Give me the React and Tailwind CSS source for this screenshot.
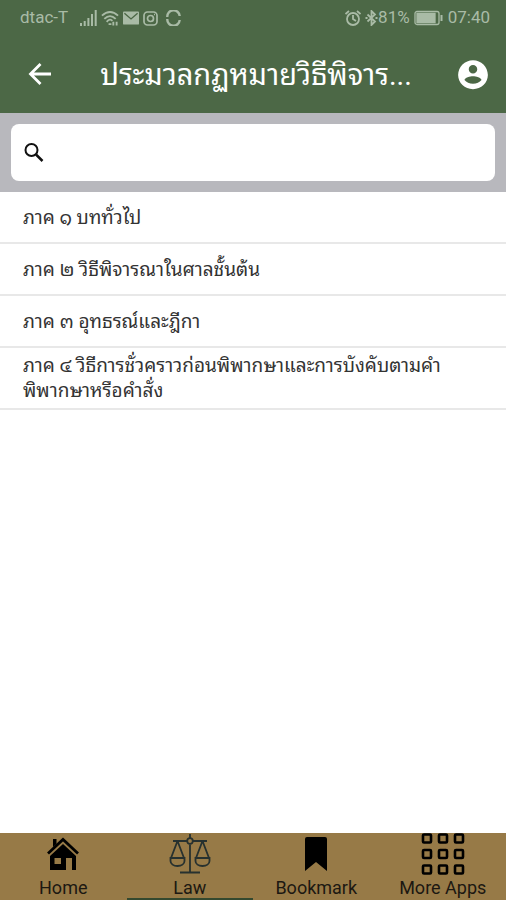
import React, { useState } from 'react';

const sections = [
  'ภาค ๑ บททั่วไป',
  'ภาค ๒ วิธีพิจารณาในศาลชั้นต้น',
  'ภาค ๓ อุทธรณ์และฎีกา',
  'ภาค ๔ วิธีการชั่วคราวก่อนพิพากษาและการบังคับตามคำพิพากษาหรือคำสั่ง',
];

const HomeIcon = () => (
  <svg width="32" height="34" viewBox="0 0 32 34">
    <path d="M6 2h3.500v5L6 10z" />
    <path d="M1 16.500 16 2.500l15 14" fill="none" stroke="#000" strokeWidth="2.800" />
    <path fillRule="evenodd" d="M16 7 29 19v14h-4V21h-6v12H3V19zM7.500 21v6h6.500v-6z" />
  </svg>
);

const LawIcon = () => (
  <svg width="42" height="40" viewBox="0 0 42 40" fill="none" stroke="#27312f" strokeWidth="1.800">
    <path d="M21 10.500V38M11 38.500h20M4 7h14M24 7h14" />
    <circle cx="21" cy="7" r="2.800" />
    <path d="M21 4V0M8.500 7 2 24M8.500 7 15 24M33.500 7 27 24M33.500 7 40 24" />
    <path d="M1.500 24h14v3c0 3-3 5-7 5s-7-2-7-5zM26.500 24h14v3c0 3-3 5-7 5s-7-2-7-5z" />
  </svg>
);

const BookmarkIcon = () => (
  <svg width="22" height="34" viewBox="0 0 22 34">
    <path d="M2 0h18a2 2 0 0 1 2 2v32L11 25 0 34V2a2 2 0 0 1 2-2z" />
  </svg>
);

const AppsIcon = () => (
  <svg width="44" height="42" viewBox="0 0 44 42" fill="none" stroke="#000" strokeWidth="2.600">
    {[1.5, 17, 32.5].map((y) =>
      [2, 18, 34].map((x) => <rect key={`${x}-${y}`} x={x} y={y} width="8" height="8" rx="1" />)
    )}
  </svg>
);

const tabs = [
  { label: 'Home', icon: HomeIcon },
  { label: 'Law', icon: LawIcon },
  { label: 'Bookmark', icon: BookmarkIcon },
  { label: 'More Apps', icon: AppsIcon },
];

const StatusBar = () => (
  <div className="flex h-9 items-center justify-between pl-5 pr-4 text-[17px] text-[#a9bba6]">
    <div className="flex items-center gap-1">
      <span className="mr-2">dtac-T</span>
      <svg width="17" height="16" viewBox="0 0 17 16" fill="currentColor">
        <path d="M0 13h2v3H0zM3.700 11h2v5h-2zM7.400 8h2v8h-2zM11 4h2v12h-2zM14.700 0h2v16h-2z" />
      </svg>
      <svg width="18" height="16" viewBox="0 0 19 16" fill="none" stroke="currentColor" strokeWidth="2">
        <path d="M1 5.500Q9.500-2 18 5.500M3.500 9Q9.500 3 15.500 9M6 12Q9.500 8 12 11" />
        <path d="M8 14.500h3M13 12v4M16.500 12v4" />
      </svg>
      <svg width="16" height="14" viewBox="0 0 17 14">
        <rect width="17" height="14" rx="1" fill="currentColor" />
        <path d="m1.500 2 7 6 7-6" fill="none" stroke="#4c6846" strokeWidth="1.500" />
      </svg>
      <svg width="15" height="15" viewBox="0 0 15 15" fill="none" stroke="currentColor" strokeWidth="1.700">
        <rect x="1" y="1" width="13" height="13" rx="3.500" />
        <circle cx="7.500" cy="7.500" r="3" />
        <path d="M11 3.500h1" />
      </svg>
      <svg className="ml-1" width="15" height="16" viewBox="0 0 15 16" fill="none" stroke="currentColor" strokeWidth="2.400">
        <path d="M1.300 7a6.200 6.200 0 0 1 12.400-1M1.300 9a6.200 6.200 0 0 0 12.400 1" />
      </svg>
    </div>
    <div className="flex items-center gap-1">
      <svg width="16" height="16" viewBox="0 0 16 16" fill="none" stroke="currentColor" strokeWidth="1.800">
        <circle cx="8" cy="9" r="6" />
        <path d="M8 5v4l3 2M.5 4 4 1M15.500 4 12 1" />
      </svg>
      <div className="flex items-center">
        <svg width="13" height="16" viewBox="0 0 13 16" fill="none" stroke="currentColor" strokeWidth="1.800">
          <path d="m2.500 4.500 7.500 7-3.500 3.500V1L10 4.500l-7.500 7M.5 8h2M10.500 8h2" />
        </svg>
        <span>81%</span>
      </div>
      <svg width="30" height="16" viewBox="0 0 30 16" fill="none" stroke="currentColor" strokeWidth="1.300">
        <rect x="1" y="1.500" width="24" height="13" rx="2" />
        <path d="M3 3.500h18v9H3z" fill="currentColor" />
        <path d="M27.500 5v6" strokeWidth="2" />
      </svg>
      <span>07:40</span>
    </div>
  </div>
);

const App = () => {
  const [query, setQuery] = useState('');
  const [activeTab, setActiveTab] = useState('Law');

  const visible = sections.filter((s) => s.includes(query));

  return (
    <div className="flex min-h-screen flex-col bg-white font-[Roboto,'Noto_Sans_Thai_Looped','Noto_Looped_Thai',Loma,Garuda,Waree,'Noto_Sans',sans-serif]">
      <header className="bg-[#4c6846]">
        <StatusBar />
        <div className="flex h-[77px] items-center px-4 text-white">
          <button aria-label="Back" className="flex w-12 justify-center">
            <svg width="24" height="24" viewBox="0 0 24 24" fill="none" stroke="currentColor" strokeWidth="2.800">
              <path d="M23 11H2.500M12.500 1 2.500 11l10 10" />
            </svg>
          </button>
          <h1 className="min-w-0 flex-1 truncate pr-2 text-center text-[29px] leading-[48px]">ประมวลกฏหมายวิธีพิจาร...</h1>
          <button aria-label="Account" className="flex w-[34px] justify-center">
            <svg width="34" height="34" viewBox="0 0 24 24" fill="currentColor">
              <path d="M12 1.500C6.200 1.500 1.500 6.200 1.500 12c0 5.500 4.700 10 10.500 10s10.500-4.500 10.500-10c0-5.800-4.700-10.500-10.500-10.500zm0 3.500c1.660 0 3 1.340 3 3s-1.340 3-3 3-3-1.340-3-3 1.340-3 3-3zm0 13.200c-2.500 0-4.710-1-6-2.600.030-1.800 4-2.700 6-2.700 1.990 0 5.970.9 6 2.700-1.290 1.600-3.500 2.600-6 2.600z" />
            </svg>
          </button>
        </div>
      </header>

      <div className="bg-[#b8b8bd] p-[11px]">
        <label className="flex h-[57px] items-center rounded-lg bg-white px-3">
          <svg width="22" height="22" viewBox="0 0 22 22" fill="none" stroke="#111" strokeWidth="2">
            <circle cx="8.500" cy="8" r="6" />
            <path d="m13 12.500 6.500 6.500" strokeWidth="2.500" />
          </svg>
          <input
            type="text"
            aria-label="Search"
            value={query}
            onChange={(e) => setQuery(e.target.value)}
            className="ml-2 min-w-0 flex-1 bg-transparent text-lg outline-none"
          />
        </label>
      </div>

      <ul className="flex-1">
        {visible.map((title) => (
          <li key={title} className="border-b-2 border-[#e8e8e8]">
            <button className="flex min-h-[50px] w-full items-center py-[5px] pl-[23px] pr-10 text-left text-[19px] leading-[25px] text-[#333]">
              {title}
            </button>
          </li>
        ))}
      </ul>

      <nav className="grid grid-cols-4 bg-[#977a47]">
        {tabs.map(({ label, icon: Icon }) => (
          <button
            key={label}
            onClick={() => setActiveTab(label)}
            className={`flex flex-col items-center border-b-2 text-lg leading-5 text-[#1c1812] ${
              activeTab === label ? 'border-[#34492f]' : 'border-transparent'
            }`}
          >
            <span className="flex h-[45px] items-center justify-center pb-1">
              <Icon />
            </span>
            <span>{label}</span>
          </button>
        ))}
      </nav>
    </div>
  );
};

export default App;
